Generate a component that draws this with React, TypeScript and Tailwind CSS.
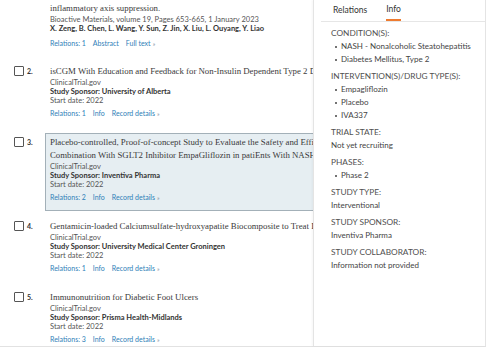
import React from 'react';

type Item = {
  num?: string;
  title: string[];
  meta: { text: string; bold?: boolean }[];
  links: string[];
  active?: boolean;
  first?: boolean;
};

const items: Item[] = [
  {
    title: ['inflammatory axis suppression.'],
    meta: [
      { text: 'Bioactive Materials, volume 19, Pages 653-665, 1 January 2023' },
      { text: 'X. Zeng, B. Chen, L. Wang, Y. Sun, Z. Jin, X. Liu, L. Ouyang, Y. Liao', bold: true },
    ],
    links: ['Relations: 1', 'Abstract', 'Full text'],
    first: true,
  },
  {
    num: '2.',
    title: ['isCGM With Education and Feedback for Non-Insulin Dependent Type 2 Diabetes'],
    meta: [
      { text: 'ClinicalTrial.gov' },
      { text: 'Study Sponsor: University of Alberta', bold: true },
      { text: 'Start date: 2022' },
    ],
    links: ['Relations: 1', 'Info', 'Record details'],
  },
  {
    num: '3.',
    title: [
      'Placebo-controlled, Proof-of-concept Study to Evaluate the Safety and Efficacy of Lanifibranor in',
      'Combination With SGLT2 Inhibitor EmpaGliflozin in patiEnts With NASH and Type 2 Diabetes Mellitus',
    ],
    meta: [
      { text: 'ClinicalTrial.gov' },
      { text: 'Study Sponsor: Inventiva Pharma', bold: true },
      { text: 'Start date: 2022' },
    ],
    links: ['Relations: 2', 'Info', 'Record details'],
    active: true,
  },
  {
    num: '4.',
    title: ['Gentamicin-loaded Calciumsulfate-hydroxyapatite Biocomposite to Treat Diabetic Foot Osteomyelitis'],
    meta: [
      { text: 'ClinicalTrial.gov' },
      { text: 'Study Sponsor: University Medical Center Groningen', bold: true },
      { text: 'Start date: 2022' },
    ],
    links: ['Relations: 1', 'Info', 'Record details'],
  },
  {
    num: '5.',
    title: ['Immunonutrition for Diabetic Foot Ulcers'],
    meta: [
      { text: 'ClinicalTrial.gov' },
      { text: 'Study Sponsor: Prisma Health-Midlands', bold: true },
      { text: 'Start date: 2022' },
    ],
    links: ['Relations: 3', 'Info', 'Record details'],
  },
];

const sections: { label: string; values: string[]; bullets?: boolean }[] = [
  { label: 'CONDITION(S):', values: ['NASH - Nonalcoholic Steatohepatitis', 'Diabetes Mellitus, Type 2'], bullets: true },
  { label: 'INTERVENTION(S)/DRUG TYPE(S):', values: ['Empagliflozin', 'Placebo', 'IVA337'], bullets: true },
  { label: 'TRIAL STATE:', values: ['Not yet recruiting'] },
  { label: 'PHASES:', values: ['Phase 2'], bullets: true },
  { label: 'STUDY TYPE:', values: ['Interventional'] },
  { label: 'STUDY SPONSOR:', values: ['Inventiva Pharma'] },
  { label: 'STUDY COLLABORATOR:', values: ['Information not provided'] },
];

const sans = { fontFamily: 'Lato, "Open Sans", sans-serif' };

const ResultRow: React.FC<{ item: Item }> = ({ item }) => (
  <div className="flex">
    <div className="w-[45px] shrink-0 flex items-start pl-[14px] pt-[4px] gap-[3px]">
      {item.num && (
        <>
          <span className="w-[10px] h-[10px] border border-[#555] bg-white rounded-[1px]"></span>
          <span className="text-[7px] leading-[10px] font-bold text-[#333]">{item.num}</span>
        </>
      )}
    </div>
    <div
      className={`flex-1 min-w-0 border pl-[4px] pt-[2px] ${item.first ? 'pb-[5px]' : 'pb-[6px]'} ${
        item.active ? 'border-[#a3b0b8] bg-[#e6eef2]' : 'border-transparent'
      }`}
    >
      {item.title.map((t) => (
        <div
          key={t}
          className="whitespace-nowrap text-[8.8px] leading-[13px] text-[#3a3a3a]"
          style={{ fontFamily: '"Liberation Serif", serif' }}
        >
          {t}
        </div>
      ))}
      {item.meta.map((m) => (
        <div
          key={m.text}
          className={`whitespace-nowrap text-[7.5px] leading-[9px] ${m.bold ? 'font-bold text-[#333]' : 'text-[#555]'}`}
        >
          {m.text}
        </div>
      ))}
      <div className={`flex gap-[7px] text-[7px] leading-[12px] text-[#2f80b8] ${item.first ? 'mt-[4px]' : 'mt-[2px]'}`}>
        {item.links.map((l, i) => (
          <span key={l} className="whitespace-nowrap">
            {l}
            {i === 2 && <span className="text-[6px] ml-[2px] text-[#7a8a99]">»</span>}
          </span>
        ))}
      </div>
    </div>
  </div>
);

export default function App() {
  return (
    <div className="w-[487px] h-[349px] bg-white overflow-hidden" style={sans}>
      <div className="flex h-[347px] w-[486px] border-b border-[#e2e2e2]">
        <div className="w-[313px] shrink-0 overflow-hidden">
          <div className="w-[380px] flex flex-col gap-[6px] -mt-[1px]">
            {items.map((it, i) => (
              <ResultRow key={i} item={it} />
            ))}
          </div>
        </div>

        <div className="flex-1 border-l border-r border-[#e4e4e4] bg-white shadow-[-1px_0_2px_rgba(0,0,0,0.04)]">
          <div className="ml-[7px] h-[22px] flex items-end border-b border-[#e6e6e6] pl-[12px] gap-[19px] text-[8.5px] text-[#333]">
            <span className="leading-[20px] pb-[1px]">Relations</span>
            <span className="leading-[20px] border-b-2 border-[#ee7b30]">Info</span>
          </div>
          <div className="pl-[17px] pt-[5px] text-[8px] leading-[13px] text-[#444]">
            {sections.map((s, i) => (
              <div key={s.label} className={i === 0 ? '' : 'mt-[4px]'}>
                <div className="text-[8.3px] text-[#505050]">{s.label}</div>
                {s.values.map((v) =>
                  s.bullets ? (
                    <div key={v} className="flex items-center">
                      <span className="w-[2px] h-[2px] rounded-full bg-[#444] ml-[4px] mr-[4px]"></span>
                      <span>{v}</span>
                    </div>
                  ) : (
                    <div key={v}>{v}</div>
                  )
                )}
              </div>
            ))}
          </div>
        </div>
      </div>
    </div>
  );
}
